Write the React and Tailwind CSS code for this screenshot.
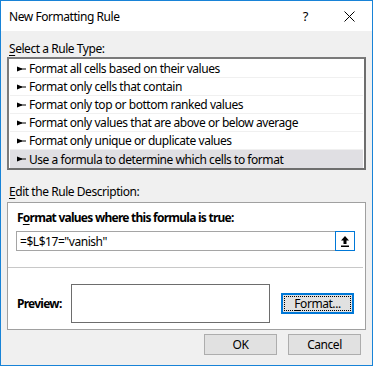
import React from "react";

const rules = [
    "Format all cells based on their values",
    "Format only cells that contain",
    "Format only top or bottom ranked values",
    "Format only values that are above or below average",
    "Format only unique or duplicate values",
    "Use a formula to determine which cells to format",
];

const Bullet = () => (
    <svg width="9" height="6" viewBox="0 0 9 6" className="shrink-0">
        <polygon points="0,0.5 5,2.5 5,3.5 0,5.5" fill="#000" />
        <rect x="0" y="2.5" width="9" height="1" fill="#000" />
    </svg>
);

const App = () => {
    return (
        <div
            className="w-[373px] h-[366px] border border-[#1883d7] bg-[#f0f0f0] flex flex-col text-[12px] tracking-[-0.45px] text-black"
            style={{ fontFamily: '"Noto Sans", "Open Sans", sans-serif' }}
        >
            {/* Title bar */}
            <div className="h-[30px] bg-white flex items-center pl-[8px] shrink-0">
                <span className="flex-1 leading-[15px]">New Formatting Rule</span>
                <span className="text-[13px] leading-[15px] mr-[36px]">?</span>
                <svg width="11" height="11" viewBox="0 0 11 11" className="mr-[17px]">
                    <path d="M0.5 0.5 L10.5 10.5 M10.5 0.5 L0.5 10.5" stroke="#000" strokeWidth="1" />
                </svg>
            </div>

            {/* Body */}
            <div className="flex flex-col px-[6px] pt-[10px]">
                <div className="leading-[15px] h-[15px] ml-[2px]">
                    <u className="underline-offset-2">S</u>elect a Rule Type:
                </div>

                <div className="mt-[1px] border-2 border-t-[#7a7a7a] border-l-[#7a7a7a] border-r-[#6e6e6e] border-b-[#6e6e6e] bg-white px-[1px] pt-[1px] h-[113px]">
                    {rules.map((r, i) => (
                        <div
                            key={r}
                            className={
                                "h-[18px] flex items-center gap-[3px] pl-[7px] " +
                                (i === rules.length - 1
                                    ? "bg-[#e0dfe3]"
                                    : "border-b border-[#f0f0f0]")
                            }
                        >
                            <Bullet />
                            <span className="leading-[15px] whitespace-nowrap">{r}</span>
                        </div>
                    ))}
                </div>

                <div className="leading-[15px] h-[15px] ml-[2px] mt-[14px]">
                    <u className="underline-offset-2">E</u>dit the Rule Description:
                </div>

                {/* Description box */}
                <div className="mt-[3px] border border-[#a0a0a0] bg-white flex flex-col pt-[7px] pb-[6px]">
                    <div className="leading-[15px] h-[15px] pl-[9px] font-bold tracking-[-0.75px]">
                        F<u className="underline-offset-2">o</u>rmat values where this formula is true:
                    </div>
                    <div className="mt-[6px] ml-[8px] mr-[10px] h-[20px] border border-[#a5a5a5] flex items-center">
                        <span className="flex-1 pl-[3px] leading-[15px] whitespace-nowrap">=$L$17="vanish"</span>
                        <div className="w-[20px] h-[20px] -mr-px border border-[#0078d7] bg-white flex items-center justify-center">
                            <svg width="10" height="12" viewBox="0 0 10 12">
                                <path d="M5 1 L9 5.5 L6.5 5.5 L6.5 9 L3.5 9 L3.5 5.5 L1 5.5 Z" fill="#000" />
                                <rect x="1" y="10.5" width="8" height="1.5" fill="#000" />
                            </svg>
                        </div>
                    </div>
                    <div className="mt-[16px] mr-[2px] h-px bg-[#c8c8c8]" />
                    <div className="mt-[16px] flex items-center h-[39px]">
                        <span className="w-[63px] pl-[9px] font-bold tracking-[-0.75px] leading-[15px]">Preview:</span>
                        <div className="w-[199px] h-[39px] border border-[#6d6d6d] bg-white" />
                        <button className="ml-[11px] w-[73px] h-[21px] border-2 border-[#0078d7] bg-[#e1e1e1] p-[1px] flex">
                            <span className="flex-1 border border-dotted border-black flex items-center justify-center leading-[15px]">
                                <u className="underline-offset-2">F</u>ormat...
                            </span>
                        </button>
                    </div>
                </div>

                {/* Footer buttons */}
                <div className="mt-[4px] flex justify-end gap-[11px] mr-[5px]">
                    <button className="w-[73px] h-[21px] border border-[#adadad] bg-[#e1e1e1] leading-[15px]">
                        OK
                    </button>
                    <button className="w-[73px] h-[21px] border border-[#adadad] bg-[#e1e1e1] leading-[15px]">
                        Cancel
                    </button>
                </div>
            </div>
        </div>
    );
};

export default App;
